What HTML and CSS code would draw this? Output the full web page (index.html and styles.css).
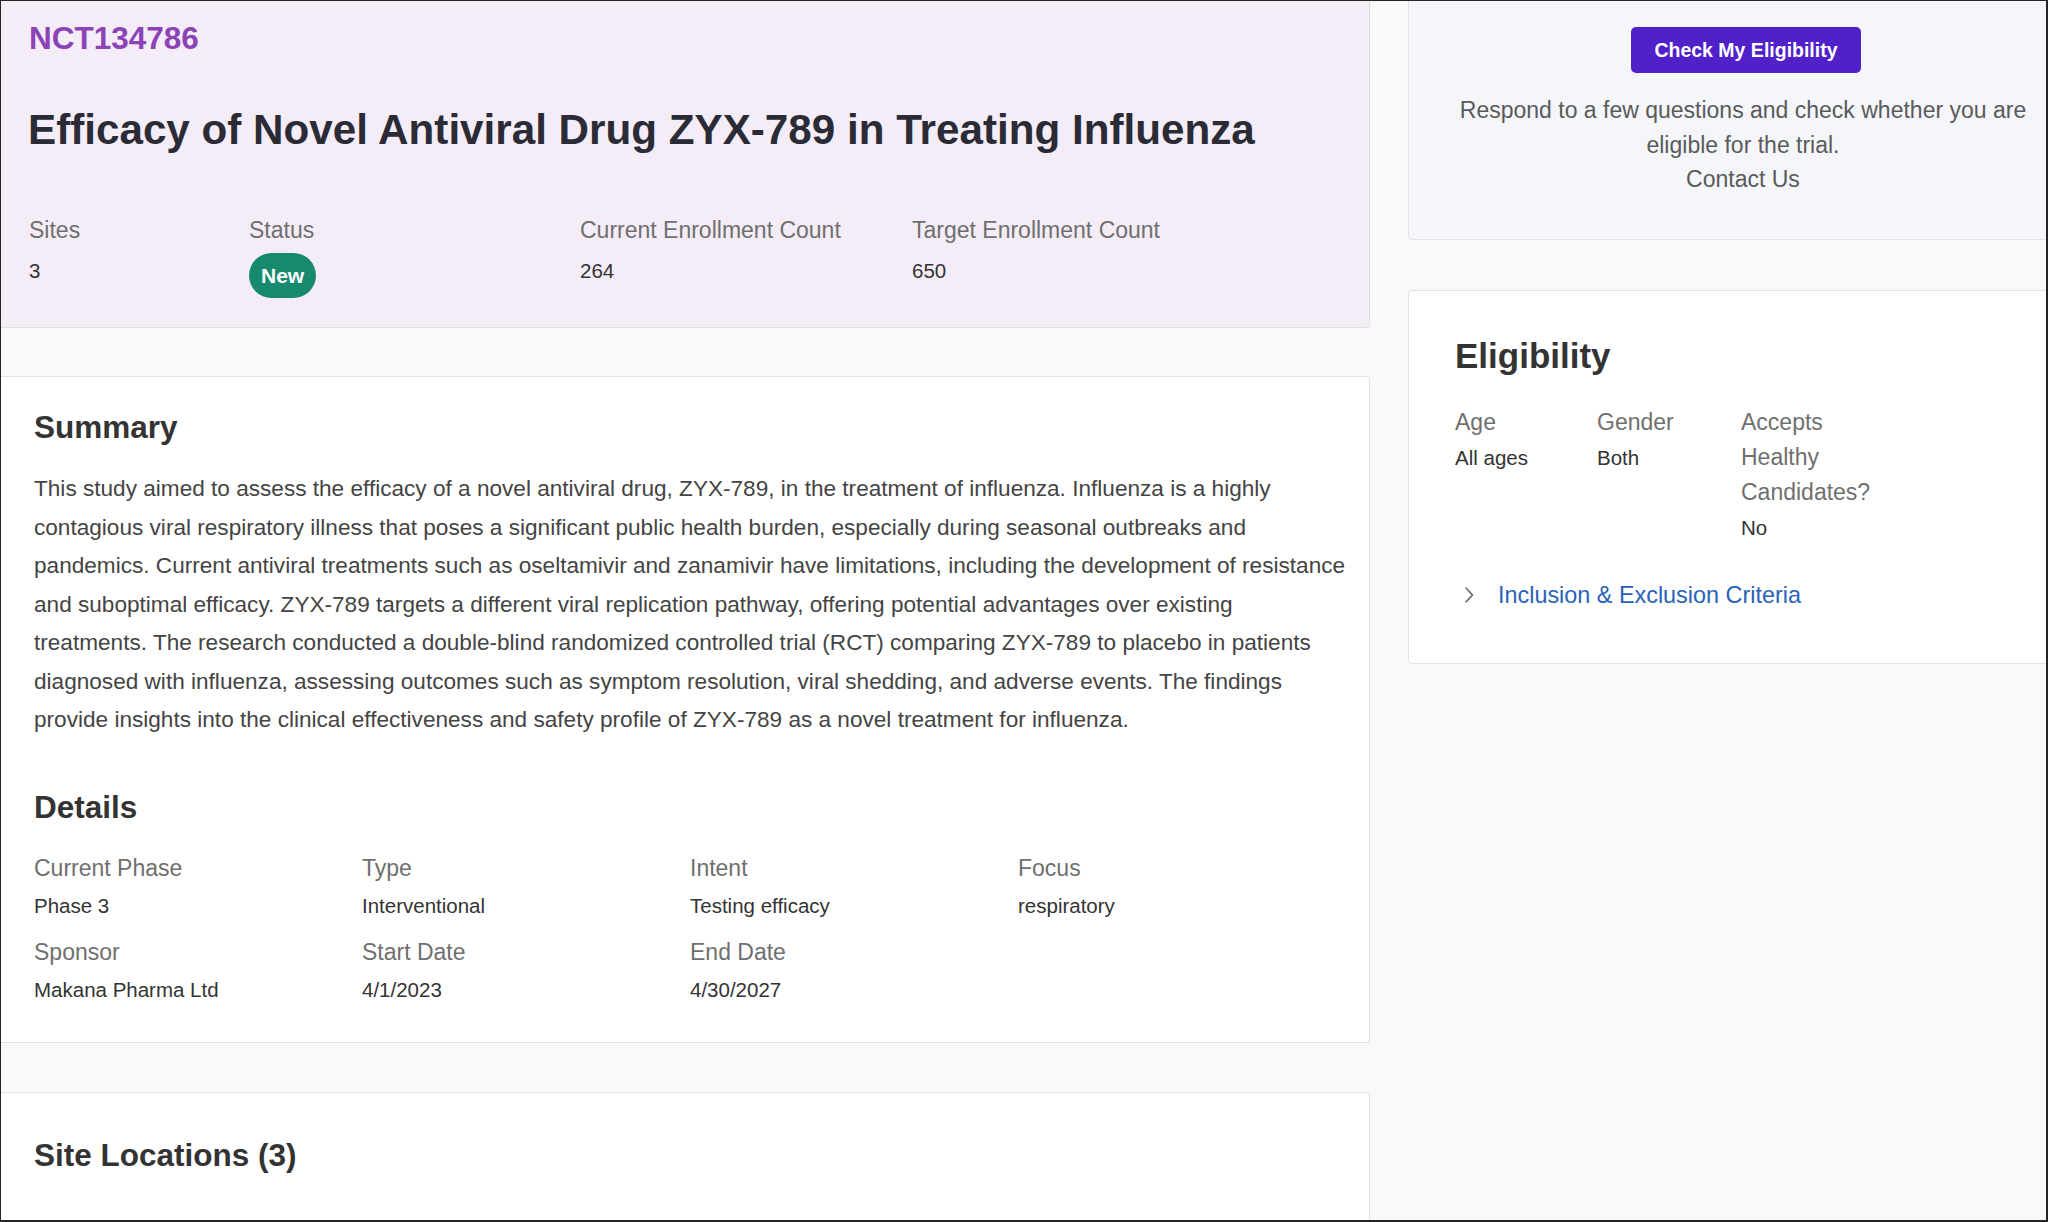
FILE: index.html
```html
<!DOCTYPE html>
<html>
<head>
    <meta charset="UTF-8">
    <meta name="viewport" content="width=device-width, initial-scale=1.0">
    <title>NCT134786 - Efficacy of Novel Antiviral Drug ZYX-789</title>
    <link rel="stylesheet" href="styles.css">
</head>
<body>
    <div class="frame">
        <div class="layout">
            <main class="main-col">
                <section class="trial-header">
                    <div class="trial-id">NCT134786</div>
                    <h1 class="trial-title">Efficacy of Novel Antiviral Drug ZYX-789 in Treating Influenza</h1>
                    <div class="trial-stats">
                        <div class="stat">
                            <div class="label">Sites</div>
                            <div class="value">3</div>
                        </div>
                        <div class="stat">
                            <div class="label">Status</div>
                            <span class="badge">New</span>
                        </div>
                        <div class="stat">
                            <div class="label">Current Enrollment Count</div>
                            <div class="value">264</div>
                        </div>
                        <div class="stat">
                            <div class="label">Target Enrollment Count</div>
                            <div class="value">650</div>
                        </div>
                    </div>
                </section>

                <section class="card summary-card">
                    <h2>Summary</h2>
                    <p class="summary-text">This study aimed to assess the efficacy of a novel antiviral drug, ZYX-789, in the treatment of influenza. Influenza is a highly contagious viral respiratory illness that poses a significant public health burden, especially during seasonal outbreaks and pandemics. Current antiviral treatments such as oseltamivir and zanamivir have limitations, including the development of resistance and suboptimal efficacy. ZYX-789 targets a different viral replication pathway, offering potential advantages over existing treatments. The research conducted a double-blind randomized controlled trial (RCT) comparing ZYX-789 to placebo in patients diagnosed with influenza, assessing outcomes such as symptom resolution, viral shedding, and adverse events. The findings provide insights into the clinical effectiveness and safety profile of ZYX-789 as a novel treatment for influenza.</p>

                    <h2 class="details-title">Details</h2>
                    <div class="details-grid">
                        <div class="detail">
                            <div class="label">Current Phase</div>
                            <div class="value">Phase 3</div>
                        </div>
                        <div class="detail">
                            <div class="label">Type</div>
                            <div class="value">Interventional</div>
                        </div>
                        <div class="detail">
                            <div class="label">Intent</div>
                            <div class="value">Testing efficacy</div>
                        </div>
                        <div class="detail">
                            <div class="label">Focus</div>
                            <div class="value">respiratory</div>
                        </div>
                        <div class="detail">
                            <div class="label">Sponsor</div>
                            <div class="value">Makana Pharma Ltd</div>
                        </div>
                        <div class="detail">
                            <div class="label">Start Date</div>
                            <div class="value">4/1/2023</div>
                        </div>
                        <div class="detail">
                            <div class="label">End Date</div>
                            <div class="value">4/30/2027</div>
                        </div>
                    </div>
                </section>

                <section class="card sites-card">
                    <h2>Site Locations (3)</h2>
                </section>
            </main>

            <aside class="side-col">
                <div class="cta-card">
                    <button class="check-button">Check My Eligibility</button>
                    <p class="cta-text">Respond to a few questions and check whether you are eligible for the trial.</p>
                    <a class="contact-link" href="#">Contact Us</a>
                </div>

                <div class="card elig-card">
                    <h2>Eligibility</h2>
                    <div class="elig-grid">
                        <div class="elig-item">
                            <div class="label">Age</div>
                            <div class="value">All ages</div>
                        </div>
                        <div class="elig-item">
                            <div class="label">Gender</div>
                            <div class="value">Both</div>
                        </div>
                        <div class="elig-item">
                            <div class="label">Accepts Healthy Candidates?</div>
                            <div class="value">No</div>
                        </div>
                    </div>
                    <a class="criteria-toggle" href="#">
                        <svg class="chevron" width="12" height="20" viewBox="0 0 12 20">
                            <path d="M3 3 L9.5 10 L3 17" fill="none" stroke="#666" stroke-width="1.6" stroke-linecap="round" stroke-linejoin="round"/>
                        </svg>
                        <span>Inclusion &amp; Exclusion Criteria</span>
                    </a>
                </div>
            </aside>
        </div>
    </div>
</body>
</html>
```

FILE: styles.css
```css
body {
    margin: 0;
    overflow: hidden;
    font-family: "Liberation Sans", Arial, Helvetica, sans-serif;
    color: #333;
}

.frame {
    width: 2048px;
    height: 1222px;
    box-sizing: border-box;
    border: 1px solid #242424;
    border-right-width: 2px;
    border-bottom-width: 2px;
    background-color: #f8f9f9;
    overflow: hidden;
}

.layout {
    display: grid;
    grid-template-columns: 1369px 670px;
    column-gap: 38px;
    align-items: start;
}

.label {
    font-size: 23px;
    line-height: 30px;
    color: #6f6f6f;
}

.value {
    font-size: 20.5px;
    line-height: 28px;
    color: #333;
}

/* header */

.trial-header {
    background-color: #f4edf7;
    border-right: 1px solid #dedede;
    border-bottom: 1px solid #dedede;
    border-bottom-right-radius: 4px;
    padding: 18px 28px 29px 27px;
}

.trial-id {
    font-size: 31.5px;
    line-height: 38px;
    font-weight: bold;
    color: #8c43b5;
    padding-left: 1px;
}

.trial-title {
    margin: 48px 0 0 0;
    font-size: 42.2px;
    line-height: 50px;
    font-weight: bold;
    color: #2b2b36;
}

.trial-stats {
    display: grid;
    grid-template-columns: 220px 331px 332px auto;
    margin-top: 60px;
    padding-left: 1px;
}

.trial-stats .value {
    margin-top: 11px;
    line-height: 30px;
}

.badge {
    display: inline-block;
    margin-top: 8px;
    height: 45px;
    line-height: 45px;
    padding: 0 12px;
    border-radius: 23px;
    background-color: #178a6e;
    color: #fff;
    font-size: 21px;
    font-weight: bold;
}

/* cards */

.card {
    background-color: #fff;
    border: 1px solid #e2e2e2;
    border-radius: 4px;
}

.main-col .card {
    border-left: none;
    border-top-left-radius: 0;
    border-bottom-left-radius: 0;
}

.card h2 {
    margin: 0;
    font-size: 31.5px;
    line-height: 38px;
    font-weight: bold;
    color: #333;
}

.summary-card {
    margin-top: 48px;
    padding: 31px 22px 38px 33px;
}

.summary-text {
    margin: 24px 0 0 0;
    max-width: 1314px;
    font-size: 22.6px;
    line-height: 38.5px;
    color: #444;
}

.details-title {
    margin-top: 48px !important;
}

.details-grid {
    display: grid;
    grid-template-columns: repeat(4, 328px);
    row-gap: 17px;
    margin-top: 27px;
}

.detail .value {
    margin-top: 9px;
}

.sites-card {
    margin-top: 49px;
    padding: 43px 33px 60px 33px;
}

/* side column */

.cta-card {
    background-color: #f5f6fa;
    border: 1px solid #e3e4e8;
    border-top: none;
    border-radius: 0 0 5px 5px;
    height: 239px;
    box-sizing: border-box;
    padding-top: 26px;
    text-align: center;
}

.check-button {
    width: 230px;
    height: 46px;
    margin-left: 6px;
    border: none;
    border-radius: 5px;
    background-color: #5020c9;
    color: #fff;
    font-family: inherit;
    font-size: 19.5px;
    font-weight: bold;
    cursor: pointer;
}

.cta-text {
    margin: 20px auto 0 auto;
    width: 600px;
    font-size: 23px;
    line-height: 34.5px;
    color: #5a5a5a;
}

.contact-link {
    display: block;
    font-size: 23px;
    line-height: 34.5px;
    color: #5a5a5a;
    text-decoration: none;
}

.elig-card {
    margin-top: 50px;
    padding: 45px 40px 51px 46px;
}

.elig-card h2 {
    font-size: 35px;
    line-height: 40px;
}

.elig-grid {
    display: grid;
    grid-template-columns: 142px 144px 142px;
    margin-top: 29px;
}

.elig-item .label {
    line-height: 35px;
}

.elig-item .value {
    line-height: 36px;
}

.criteria-toggle {
    display: flex;
    align-items: center;
    gap: 23px;
    margin-top: 32px;
    padding-left: 8px;
    font-size: 23.4px;
    line-height: 34px;
    color: #2a62b8;
    text-decoration: none;
}
```
